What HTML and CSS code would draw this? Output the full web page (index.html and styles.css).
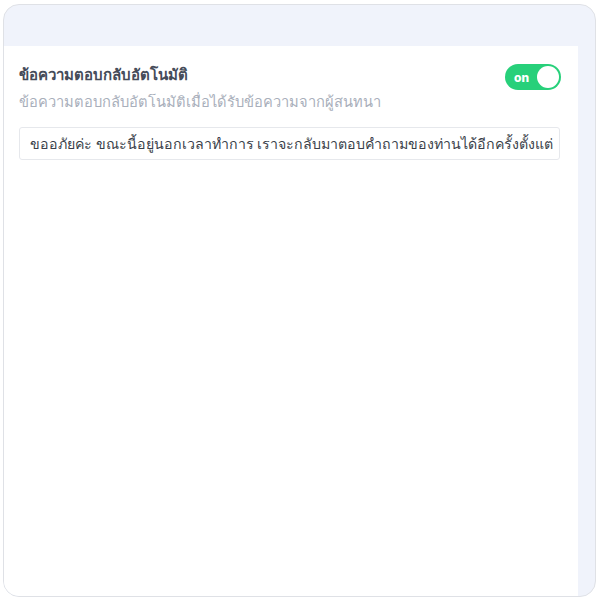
FILE: index.html
```html
<!DOCTYPE html>
<html lang="th">
<head>
    <meta charset="UTF-8">
    <meta name="viewport" content="width=device-width, initial-scale=1.0">
    <title>ข้อความตอบกลับอัตโนมัติ</title>
    <link rel="stylesheet" href="styles.css">
</head>
<body>
    <div class="frame">
        <div class="frame-top"></div>
        <div class="frame-body">
            <div class="panel">
                <div class="setting-head">
                    <div>
                        <div class="setting-title">ข้อความตอบกลับอัตโนมัติ</div>
                        <div class="setting-desc">ข้อความตอบกลับอัตโนมัติเมื่อได้รับข้อความจากผู้สนทนา</div>
                    </div>
                    <div class="toggle">
                        <span class="toggle-label">on</span>
                        <span class="toggle-knob"></span>
                    </div>
                </div>
                <input type="text" class="reply-input" value="ขออภัยค่ะ ขณะนี้อยู่นอกเวลาทำการ เราจะกลับมาตอบคำถามของท่านได้อีกครั้งตั้งแต่">
            </div>
            <div class="side-strip"></div>
        </div>
    </div>
</body>
</html>
```

FILE: styles.css
```css
body {
    margin: 0;
    font-family: "Noto Sans", "Liberation Sans", sans-serif;
    background: #fff;
}
.frame {
    margin: 4px 0 0 3px;
    width: 593px;
    height: 593px;
    box-sizing: border-box;
    border: 1px solid #dfe1e6;
    border-radius: 16px;
    background: #f0f3fb;
    overflow: hidden;
    display: flex;
    flex-direction: column;
}
.frame-top {
    height: 41px;
    flex: none;
}
.frame-body {
    flex: 1;
    display: flex;
}
.panel {
    width: 574px;
    background: #fff;
    padding: 18px 17px 0 15px;
    box-sizing: border-box;
}
.side-strip {
    flex: 1;
}
.setting-head {
    display: flex;
    justify-content: space-between;
    align-items: flex-start;
}
.setting-title {
    font-size: 15px;
    font-weight: bold;
    color: #454b59;
    line-height: 21px;
}
.setting-desc {
    font-size: 14.7px;
    color: #a9afbb;
    line-height: 21px;
    margin-top: 6px;
}
.toggle {
    width: 56px;
    height: 26px;
    border-radius: 13px;
    background: #27d07a;
    display: flex;
    align-items: center;
    justify-content: space-between;
    padding: 0 2px 0 9px;
    box-sizing: border-box;
}
.toggle-label {
    color: #fff;
    font-weight: 800;
    font-size: 12px;
    font-family: "Inter", "Noto Sans", sans-serif;
}
.toggle-knob {
    width: 22px;
    height: 22px;
    border-radius: 50%;
    background: #fff;
}
.reply-input {
    display: block;
    margin-top: 15px;
    width: 541px;
    height: 33px;
    box-sizing: border-box;
    border: 1px solid #e6e8ec;
    border-radius: 3px;
    padding: 0 2px 0 10px;
    font-family: inherit;
    font-size: 14.2px;
    color: #3a3f4a;
    outline: none;
}
```
